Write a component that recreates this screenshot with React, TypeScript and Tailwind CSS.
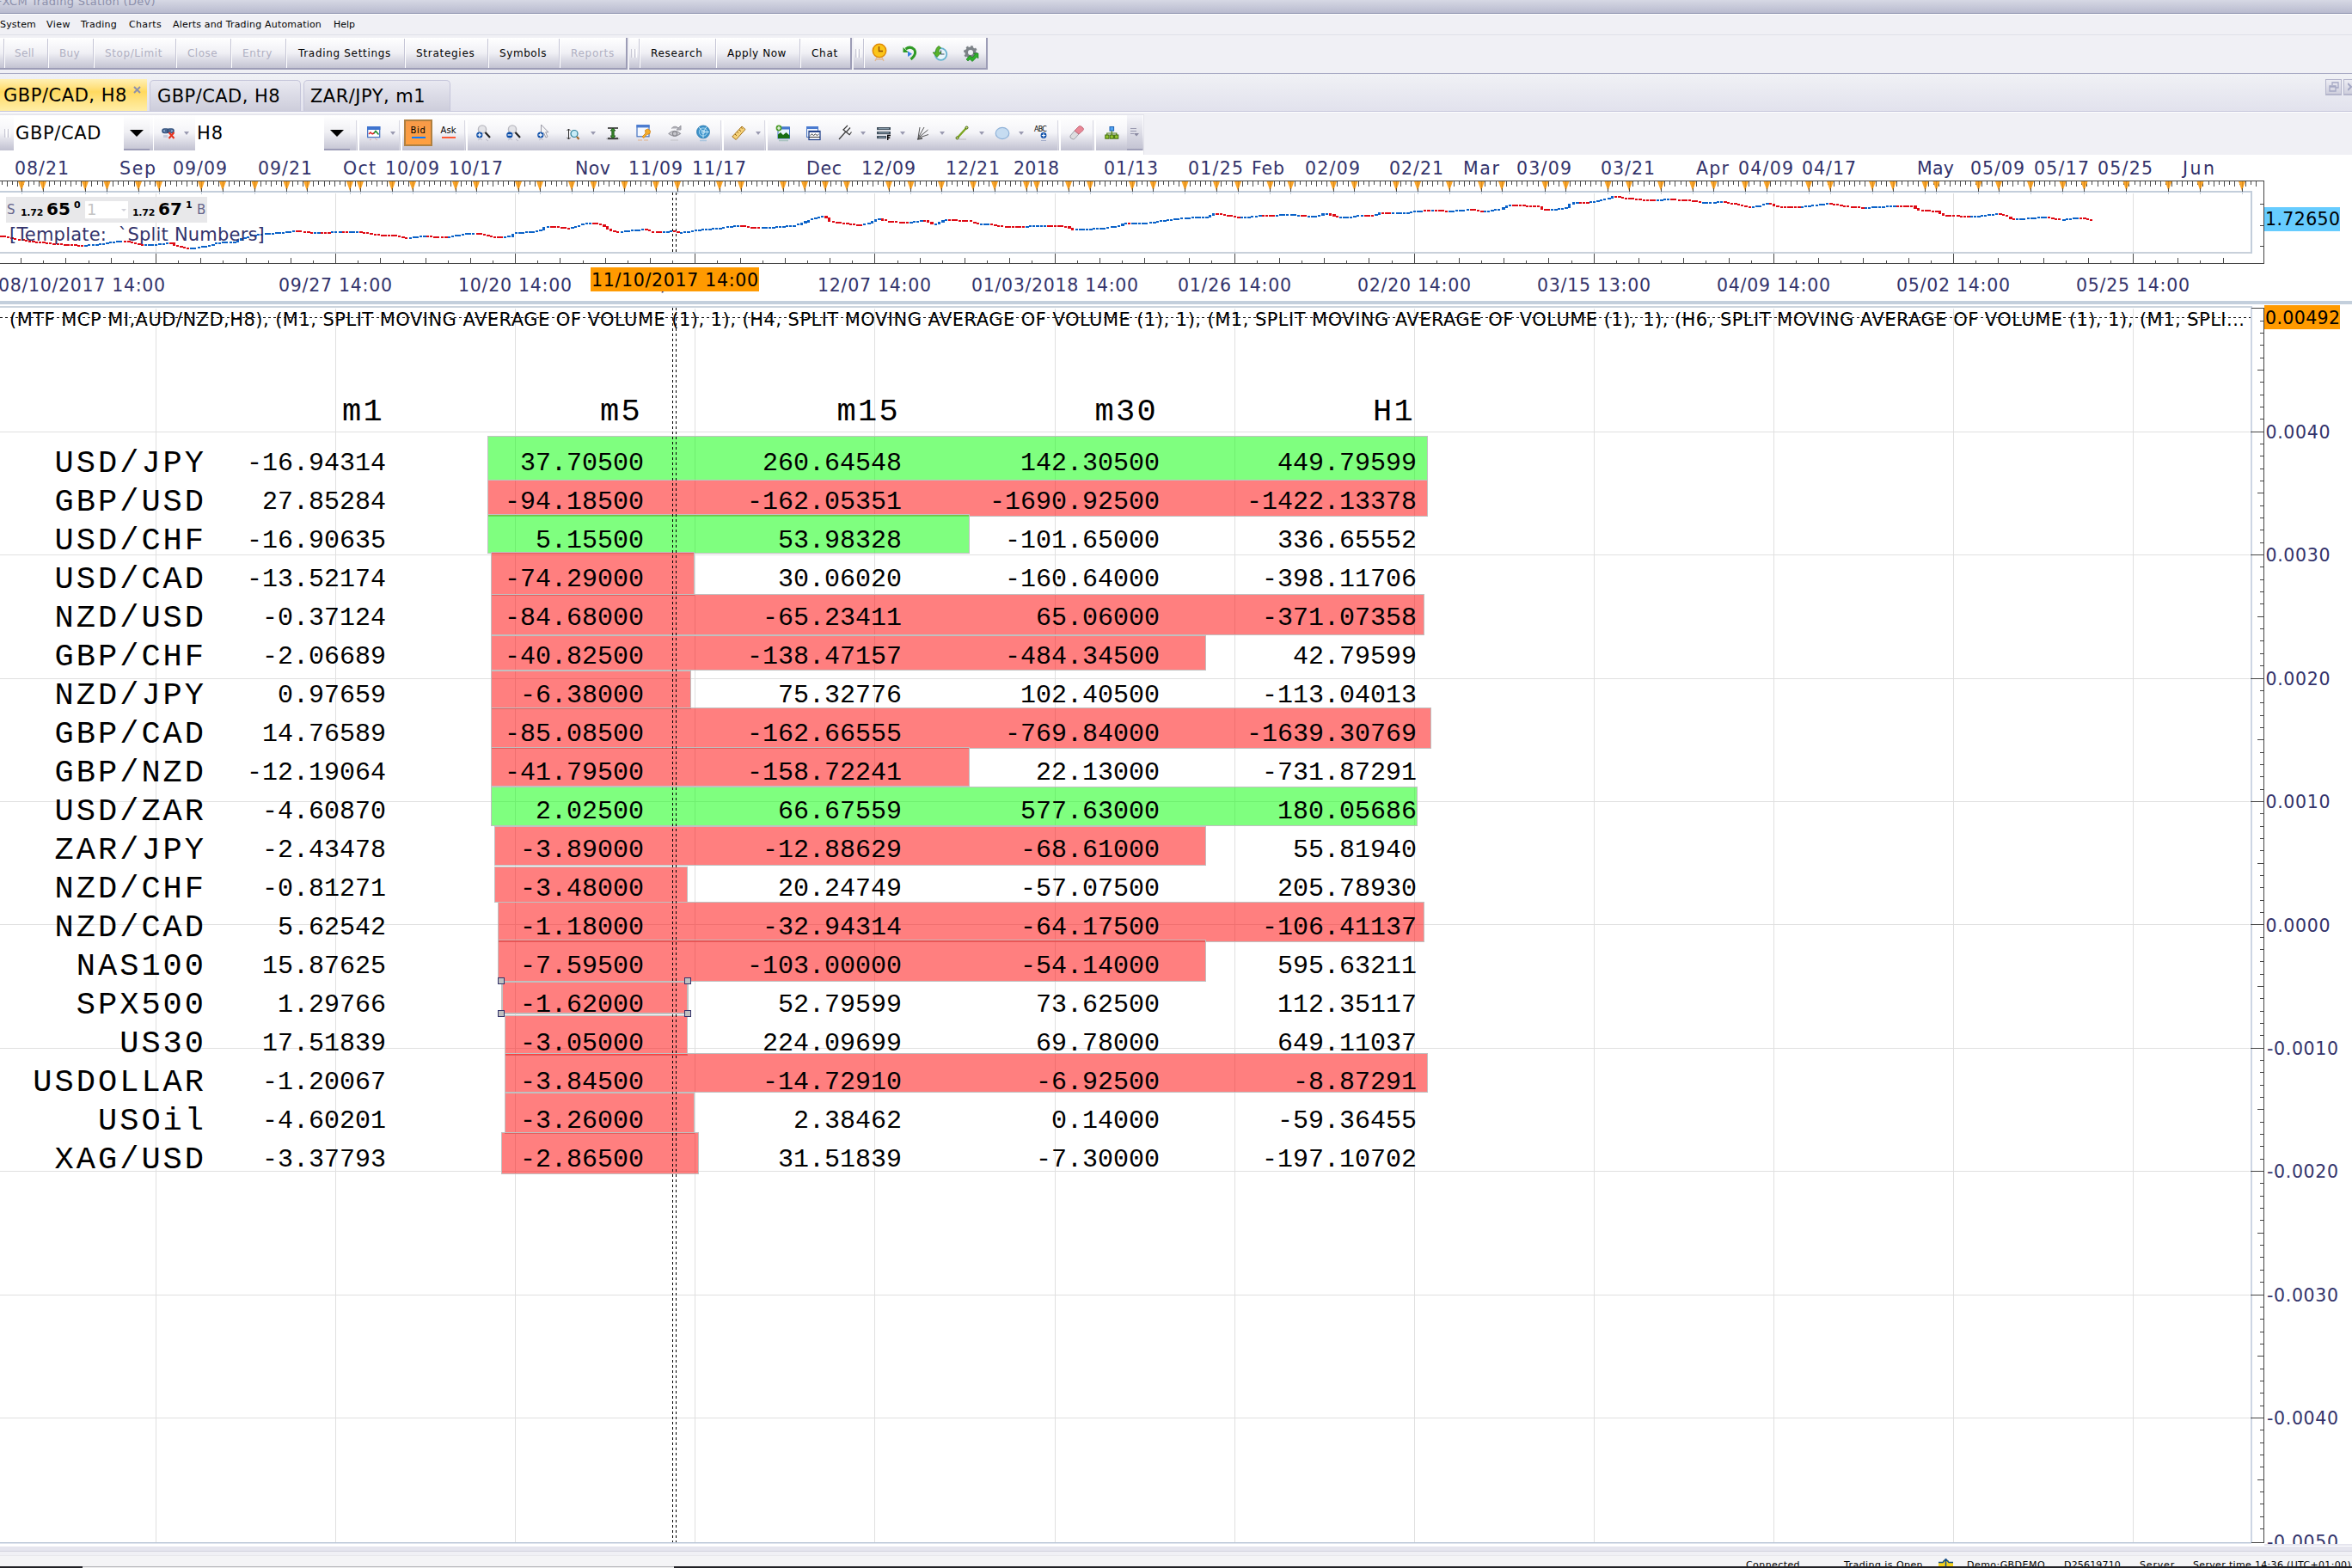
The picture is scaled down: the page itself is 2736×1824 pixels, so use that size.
import React, { useLayoutEffect, useRef, useState } from "react";

const NAVY = "#33336b";
const FONT = '"DejaVu Sans", Verdana, sans-serif';

/* Text whose tracking is adjusted so that it fills the given width. */
function Fit({ w, className = "", children }: { w: number; className?: string; children: string }) {
  const ref = useRef<HTMLSpanElement>(null);
  const [ls, setLs] = useState(0);
  useLayoutEffect(() => {
    const el = ref.current;
    if (el) setLs((w - el.getBoundingClientRect().width) / children.length);
  }, []);
  return (
    <span ref={ref} className={`inline-block whitespace-pre ${className}`} style={{ letterSpacing: ls }}>
      {children}
    </span>
  );
}

/* ---------- icons ---------- */
function Ico({ children, w = 18, h = 20 }: { children: React.ReactNode; w?: number; h?: number }) {
  return (
    <svg width={w} height={h} viewBox={`0 0 ${w} ${h}`} fill="none" className="block shrink-0">
      {children}
    </svg>
  );
}

const LinkIcon = () => (
  <Ico>
    <g stroke="#33507c" strokeWidth="1.6">
      <rect x="1" y="5" width="7" height="4.5" rx="2.2" fill="#7f9cc4" />
      <rect x="7" y="5" width="7" height="4.5" rx="2.2" fill="#7f9cc4" />
      <path d="M4 7.2H11" />
    </g>
    <path d="M8.5 9l6 7M14.5 9l-6 7" stroke="#e8311c" strokeWidth="2" />
    <path d="M2 12h5v3H2z" fill="#8a94b8" opacity=".35" />
  </Ico>
);
const TemplateIcon = () => (
  <Ico>
    <rect x=".7" y="2.7" width="14" height="12" fill="#fff" stroke="#3d6cc0" strokeWidth="1.2" />
    <rect x="0" y="2" width="15.4" height="4" fill="#3f74cf" />
    <path d="M2 11l2-2 2 2" stroke="#d22" strokeWidth="1.5" />
    <path d="M6 11l2.500-1.500" stroke="#d22" strokeWidth="1.500" />
    <path d="M8 10l2-2.500 3.500 4" stroke="#1a8a2a" strokeWidth="1.500" />
    <path d="M3 18l2-1M9 16l3 2" stroke="#c77" opacity=".5" />
  </Ico>
);
const Magnifier = ({ minus = false }: { minus?: boolean }) => (
  <Ico>
    <circle cx="7" cy="5.500" r="4.600" fill="#e4e4e8" stroke="#b9b9c0" strokeWidth="1.400" />
    <path d="M10.500 9l5.500 6" stroke="#222" strokeWidth="2.200" />
    <circle cx="3.800" cy="12" r="3.600" fill="#0b4da8" />
    <path d="M1.600 12h4.400" stroke="#fff" strokeWidth="1.300" />
    {!minus && <path d="M3.800 9.800v4.400" stroke="#fff" strokeWidth="1.300" />}
    <path d="M2 18l3-1.500 2 1.500M11 17l3 2" stroke="#99a" opacity=".5" />
  </Ico>
);
const CursorPlus = () => (
  <Ico>
    <path d="M4.500 0v12l3-2.500 2.500 5.500 2-1-2.300-5.200H13z" fill="#f4f4f6" stroke="#9a9aa6" />
    <circle cx="3.800" cy="12" r="3.600" fill="#0b4da8" />
    <path d="M1.600 12h4.400M3.800 9.800v4.400" stroke="#fff" strokeWidth="1.300" />
    <path d="M2 18l3-1.500 2 1.500" stroke="#99a" opacity=".5" />
  </Ico>
);
const AxisZoom = () => (
  <Ico>
    <path d="M2.500 5v12M.5 7l2-2 2 2M.5 15l2 2 2-2" stroke="#333" />
    <circle cx="9" cy="10.500" r="4" fill="#c9ecf7" stroke="#2b7f98" strokeWidth="1.200" />
    <path d="M12 14l2.500 3" stroke="#a0662a" strokeWidth="2" />
  </Ico>
);
const IBeam = () => (
  <Ico>
    <ellipse cx="8" cy="16.500" rx="8" ry="1.600" fill="#777" opacity=".4" />
    <path d="M2 4h12M2 16h12" stroke="#222" strokeWidth="1.300" />
    <path d="M8 4l3 3H9.200v6h1.800L8 16l-3-3h1.800V7H5z" fill="#3a8a2c" stroke="#164d12" strokeWidth=".8" />
  </Ico>
);
const NoteKey = () => (
  <Ico>
    <rect x="1" y=".8" width="14" height="13" fill="#f4f8ff" stroke="#4472c0" strokeWidth="1.200" />
    <rect x=".5" y=".2" width="15" height="3.200" fill="#4a7bd0" />
    <path d="M7 14l4-4-.5-3.500 3-1.500 3 2-.5 3.500-3.500 1-3.500 4z" fill="#f3ad2c" stroke="#d07d10" strokeWidth=".8" />
    <path d="M2 18h5M9 18h5" stroke="#e3ad80" opacity=".6" strokeWidth="1.500" />
  </Ico>
);
const EyeIcon = () => (
  <Ico>
    <path d="M1 10.500Q7.500 4 14.500 10.500 7.500 16 1 10.500z" fill="#d6d6da" stroke="#9a9aa2" strokeWidth="1.100" />
    <circle cx="8" cy="10.500" r="2.700" fill="#c5c5cb" stroke="#88888f" strokeWidth="1.300" />
    <path d="M4 4.500Q8 0 12.500 4.200M15 1v5h-5z" stroke="#9a9aa2" fill="#9a9aa2" strokeWidth="1" fillOpacity=".8" />
    <path d="M3 18h9" stroke="#aaa" opacity=".5" />
  </Ico>
);
const Radar = () => (
  <Ico>
    <circle cx="8" cy="8.500" r="7.400" fill="#3f94cb" stroke="#2c7cb2" />
    <circle cx="8" cy="8.500" r="4.600" stroke="#a9d8f2" />
    <circle cx="8" cy="8.500" r="2" stroke="#a9d8f2" />
    <path d="M8 8.500L12 2.500M8 8.500h7M8 8.500L3 3M8 8.500v7" stroke="#d5eefa" strokeWidth=".9" />
    <path d="M4 18.500h8" stroke="#8bb8da" opacity=".6" strokeWidth="1.500" />
  </Ico>
);
const RulerIcon = () => (
  <Ico>
    <path d="M.8 14L12 2l4 3.500L5.200 17.500z" fill="#f6d27a" stroke="#a5731a" />
    <path d="M4 11l2 1.800M6.500 8.500l1.400 1.200M9 6l2 1.800M11.200 3.500l1.400 1.200" stroke="#8d5e10" />
  </Ico>
);
const PictureIcon = () => (
  <Ico>
    <rect x="3" y="3" width="13.500" height="13" fill="#e9f3fd" stroke="#3c6ec4" />
    <rect x="3" y="2.500" width="13.500" height="3" fill="#4579cf" />
    <path d="M3 16V11.500l3-2.500 3 3 3.500-3 4 3.500V16z" fill="#176d12" />
    <circle cx="4" cy="4" r="3.400" fill="#4d9c2a" />
    <path d="M2 4h4M4 2v4" stroke="#fff" strokeWidth="1.200" />
    <path d="M4 18.500h11" stroke="#7a9" opacity=".5" strokeWidth="1.600" />
  </Ico>
);
const WindowsIcon = () => (
  <Ico>
    <rect x="1.500" y="2.500" width="13" height="12" fill="#f4f8ff" stroke="#4472c0" />
    <rect x="1" y="2" width="14" height="3" fill="#4a7bd0" />
    <rect x="4" y="7.500" width="13" height="10" fill="#fff" stroke="#27468c" strokeWidth="1.300" />
    <path d="M4 8h13" stroke="#27468c" strokeWidth="2" />
    <path d="M5.500 12.500l2-1.500 2 1.500 2-1.500 2 1.500 2-1.500M4 14.500h13" stroke="#222" strokeWidth=".9" />
  </Ico>
);
const Pitchfork = () => (
  <Ico>
    <path d="M1 17L9 8M5.500 5.500l8 6.500M6 6l5-5M9.500 8.500l4.500-5M13 12l2.500-3.500" stroke="#3b3b3b" strokeWidth="1.200" />
  </Ico>
);
const LinesF = () => (
  <Ico>
    {[3, 8, 13].map((y) => (
      <g key={y}>
        <rect x="1" y={y} width={y === 13 ? 11 : 16} height="3.200" fill="#43525f" />
        <path d={`M3 ${y + 1.6}h${y === 13 ? 8 : 12}`} stroke="#93a7b5" strokeWidth=".9" />
      </g>
    ))}
    <path d="M13.700 18V12.500H17M13.700 15.200h2.600" stroke="#000" strokeWidth="1.400" />
  </Ico>
);
const FanIcon = () => (
  <Ico>
    <path d="M2 15.500L4 3M2 15.500L9 3M2 15.500L13.500 6M2 15.500L14 11.500" stroke="#555" />
    <path d="M1 17l6-1" stroke="#444" strokeWidth="1.500" />
  </Ico>
);
const TrendLine = () => (
  <Ico>
    <path d="M3 15L13 4" stroke="#7ba51f" strokeWidth="2.400" />
    <circle cx="2.500" cy="15.500" r="1.500" fill="#cde27a" stroke="#3f5f0c" />
    <circle cx="13.500" cy="3.500" r="1.500" fill="#cde27a" stroke="#3f5f0c" />
    <path d="M4 17h9" stroke="#888" opacity=".4" />
  </Ico>
);
const EllipseIcon = () => (
  <Ico>
    <ellipse cx="9" cy="10" rx="7.800" ry="6.600" fill="#c6dcf1" stroke="#8fb2d8" strokeWidth="1.200" />
  </Ico>
);
const AbcIcon = () => (
  <div className="relative h-[20px] w-[18px]">
    <span className="absolute left-0 top-[1px] text-[8px] leading-[9px] tracking-[-0.800px] text-black">ABC</span>
    <div className="absolute left-[7px] top-[9px]">
      <Ico w={8} h={12}>
        <circle cx="4" cy="3.500" r="3.400" fill="#0b4da8" />
        <path d="M1.800 3.500h4.400M4 1.300v4.400" stroke="#fff" strokeWidth="1.200" />
        <path d="M1 9.500h6" stroke="#6b7fae" opacity=".5" />
      </Ico>
    </div>
  </div>
);
const Eraser = () => (
  <Ico>
    <path d="M1 13L6 7l5 4-5 5.500q-1.500 1-3 0L1 15z" fill="#dcdcdf" stroke="#a0a0a9" />
    <path d="M6 7l5-5q1.500-1 3 .3L16 4q1 1.500 0 2.500L11 11z" fill="#e98796" stroke="#c36a7a" />
  </Ico>
);
const TreeIcon = () => (
  <Ico>
    <rect x="6" y="2.500" width="4.600" height="4.600" fill="#52a3f0" stroke="#1c62b4" />
    <path d="M8.300 7.200v3M2.800 12V10h11v2M8.300 10v2" stroke="#4d7e11" strokeWidth="1.200" />
    {[0.8, 6.2, 11.6].map((x) => (
      <rect key={x} x={x} y="12" width="4.200" height="4.200" fill="#93c430" stroke="#3f6b0a" />
    ))}
  </Ico>
);
const ClockGold = () => (
  <Ico w={18} h={24}>
    <circle cx="9" cy="9" r="7.700" fill="#fbc51a" stroke="#e08a07" strokeWidth="1.500" />
    <path d="M8.500 4v5.500H13" stroke="#8d4a05" strokeWidth="1.400" />
    <path d="M6 17l-2 4M12 17l2 4M5 19h8" stroke="#e1a870" opacity=".7" strokeWidth="1.500" />
  </Ico>
);
const ReplayIcon = () => (
  <Ico>
    <path d="M3.500 5Q9 1 13.500 5.500 17 11 9.500 17" stroke="#2f9a25" strokeWidth="3" />
    <path d="M.5 3v6h6.500z" fill="#2f9a25" />
    <path d="M6 7.500l5 3.200-5 3.300z" fill="#3a7fe0" />
  </Ico>
);
const HistoryIcon = () => (
  <Ico>
    <circle cx="9.500" cy="11" r="6.800" fill="#e8f5fb" stroke="#67b3cf" strokeWidth="1.800" />
    <path d="M9.500 6.500V11h4" stroke="#456" strokeWidth="1.200" />
    <path d="M7 1.500Q3 4 3.500 9H0l5 5.500L10 9H7Q6.500 5.500 9.500 3.500z" fill="#58b22a" stroke="#2d7d12" strokeWidth=".7" />
  </Ico>
);
const GearUp = () => (
  <Ico>
    <circle cx="8" cy="9" r="4.800" stroke="#7c8287" strokeWidth="3.600" />
    <circle cx="8" cy="9" r="7" stroke="#7c8287" strokeWidth="2" strokeDasharray="2.750 2.750" />
    <path d="M3 17l4-4.500 3 2.500 3-3.500-1.500-1.500H17v6l-1.800-1.500-5 5-3-2.500L5 19z" fill="#2faf2b" stroke="#137318" strokeWidth=".6" />
  </Ico>
);

const Arr = () => <div className="h-0 w-0 border-x-[3.500px] border-t-[4px] border-x-transparent border-t-[#9a9ab0]" />;
const Sep = () => (
  <div className="flex h-[35px] w-[4px] shrink-0 gap-[1px] self-end">
    <div className="w-px bg-[#d8d8e2]" />
    <div className="w-[2px] bg-white" />
  </div>
);

/* ---------- main action toolbar ---------- */
const GROUP = "flex h-[37px] shrink-0 items-center border-b-2 border-r-2 border-[#9c9cb6] bg-linear-to-b from-white via-[#f0f0f5] to-[#c3c3d2]";
const GroupSep = () => <div className="h-[34px] w-[2px] shrink-0 border-l border-[#c5c5d5] bg-white" />;
const Grip = () => (
  <div className="flex w-[11px] shrink-0 justify-center gap-[1px]">
    <div className="h-[10px] w-px bg-[#c8c8d4]" />
    <div className="h-[10px] w-px bg-white" />
    <div className="h-[10px] w-px bg-[#c8c8d4]" />
    <div className="h-[10px] w-px bg-white" />
  </div>
);
const actions: [string, string, string, number, boolean][] = [
  ["Sell", "w-[51px]", "pl-[11px]", 23, false],
  ["Buy", "w-[53px]", "pl-[12px]", 24, false],
  ["Stop/Limit", "w-[96px]", "pl-[12px]", 67, false],
  ["Close", "w-[64px]", "pl-[12px]", 35, false],
  ["Entry", "w-[64px]", "pl-[12px]", 35, false],
  ["Trading Settings", "w-[138px]", "pl-[13px]", 108, true],
  ["Strategies", "w-[97px]", "pl-[12px]", 68.5, true],
  ["Symbols", "w-[83px]", "pl-[12px]", 55, true],
  ["Reports", "w-[78px]", "pl-[12px]", 51, false],
];
const actions2: [string, string, string, number][] = [
  ["Research", "w-[89px]", "pl-[12px]", 60.5],
  ["Apply Now", "w-[98px]", "pl-[12px]", 69],
  ["Chat", "w-[59px]", "pl-[12px]", 31],
];

/* ---------- chart toolbar ---------- */
const tools: [string, React.ReactNode][] = [
  ["w-[35px]", <Magnifier />],
  ["w-[36px]", <Magnifier minus />],
  ["w-[34px]", <CursorPlus />],
  ["w-[28px]", <AxisZoom />],
  ["w-[18px]", <Arr />],
  ["w-[35px]", <IBeam />],
  ["w-[37px]", <NoteKey />],
  ["w-[33px]", <EyeIcon />],
  ["w-[28px]", <Radar />],
  ["w-[13px]", <Sep />],
  ["w-[28px]", <RulerIcon />],
  ["w-[10px]", <Arr />],
  ["w-[13px]", <Sep />],
  ["w-[35px]", <PictureIcon />],
  ["w-[38px]", <WindowsIcon />],
  ["w-[26px]", <Pitchfork />],
  ["w-[18px]", <Arr />],
  ["w-[28px]", <LinesF />],
  ["w-[19px]", <Arr />],
  ["w-[27px]", <FanIcon />],
  ["w-[18px]", <Arr />],
  ["w-[28px]", <TrendLine />],
  ["w-[18px]", <Arr />],
  ["w-[28px]", <EllipseIcon />],
  ["w-[18px]", <Arr />],
  ["w-[27px]", <AbcIcon />],
  ["w-[14px]", <Sep />],
  ["w-[27px]", <Eraser />],
  ["w-[14px]", <Sep />],
  ["w-[26px]", <TreeIcon />],
];

const ComboArrow = () => (
  <div className="flex h-full w-[30px] shrink-0 items-center justify-center border-b-2 border-[#9c9cb6] bg-linear-to-b from-white via-[#f0f0f4] to-[#c8c8d6]">
    <div className="mt-[2px] h-0 w-0 border-x-[8px] border-t-[8px] border-x-transparent border-t-black" />
  </div>
);

/* ---------- chart data ---------- */
const gridX = Array.from({ length: 12 }, (_, i) => Math.floor(181.5 + i * 209.1) + 0.5);

const topDates: [string, number, number][] = [
  ["08/21", 18, 61], ["Sep", 140, 40], ["09/09", 202, 61], ["09/21", 301, 61], ["Oct", 400, 36], ["10/09", 449, 61],
  ["10/17", 523, 61], ["Nov", 670, 39], ["11/09", 732, 61], ["11/17", 806, 61], ["Dec", 939, 39], ["12/09", 1003, 61],
  ["12/21", 1101, 61], ["2018", 1180, 51], ["01/13", 1285, 61], ["01/25", 1383, 62], ["Feb", 1457, 36], ["02/09", 1519, 62],
  ["02/21", 1617, 61], ["Mar", 1703, 40], ["03/09", 1765, 62], ["03/21", 1863, 61], ["Apr", 1974, 36], ["04/09", 2023, 62],
  ["04/17", 2097, 61], ["May", 2231, 41], ["05/09", 2293, 61], ["05/17", 2367, 62], ["05/25", 2441, 62], ["Jun", 2540, 35],
];
const bottomDates = ["09/27 14:00", "10/20 14:00", "11/14 14:00", "12/07 14:00", "01/03/2018 14:00", "01/26 14:00", "02/20 14:00", "03/15 13:00", "04/09 14:00", "05/02 14:00", "05/25 14:00"];

const markers = [
  25, 50, 99, 124.5, 161, 185, 234, 259, 296.5, 333.5, 357, 407, 419, 456, 480, 530, 554, 603, 628, 665, 690.5, 726.5, 763, 788, 837, 862,
  911, 936, 960, 985, 1034, 1059.5, 1095, 1132, 1157, 1194, 1206, 1243, 1268, 1317, 1341.5, 1378.5, 1415, 1440, 1477.5, 1501.5, 1551,
  1575.5, 1624, 1649, 1686, 1723, 1747, 1797.5, 1821.5, 1870.5, 1895, 1932, 1969, 1993.5, 2030, 2055.5, 2104, 2129, 2178, 2202, 2239.5,
  2252.5, 2301.5, 2325, 2362, 2399.5, 2424.5, 2473.5, 2522.5, 2559.5, 2608,
];

const price = [
  0, 274, 15, 277, 30, 280, 50, 282, 70, 284, 100, 285.5, 120, 283.5, 145, 280, 165, 284.5, 180, 285, 200, 282, 206, 286, 222, 289, 245, 286,
  255, 282.5, 275, 281, 285, 277, 295, 274, 310, 272, 330, 270.5, 345, 268.5, 365, 271, 385, 270.5, 395, 269, 420, 270, 440, 273, 460, 274,
  475, 277, 495, 274.5, 520, 276, 540, 272.5, 555, 271, 570, 275, 593, 276, 600, 271, 630, 268.5, 637, 263, 665, 265.5, 680, 261, 689, 259,
  702, 261.7, 711, 268, 720, 270, 751, 266.5, 758, 269, 774, 270, 785, 268.5, 792, 270.5, 807, 269, 818, 266.7, 836, 265.7, 863, 262, 872, 264,
  903, 264, 928, 262, 943, 256, 961, 251, 968, 258, 988, 260, 1004, 262, 1013, 259, 1024, 253.7, 1033, 257, 1055, 259, 1077, 256.3, 1088, 261,
  1102, 255.7, 1126, 256.3, 1140, 261, 1151, 259.7, 1160, 262.7, 1196, 264.3, 1202, 262.3, 1227, 262.3, 1245, 264, 1248, 267, 1283, 265.7,
  1305, 262.3, 1310, 259, 1336, 259.7, 1359, 255.7, 1387, 253, 1407, 252, 1416, 247.7, 1427, 250.3, 1445, 253.3, 1467, 251, 1498, 249.7,
  1516, 250.3, 1521, 252, 1539, 250.7, 1544, 247.3, 1556, 252.3, 1572, 252.7, 1583, 250.7, 1601, 250.7, 1606, 247.3, 1639, 248, 1646, 245.7,
  1672, 244.3, 1684, 245.7, 1713, 243.7, 1724, 246.3, 1748, 243.3, 1757, 238.3, 1791, 239.7, 1795, 243, 1806, 244, 1826, 241.3, 1830, 236,
  1853, 235, 1873, 231.3, 1878, 228.3, 1891, 230.3, 1909, 232, 1929, 233.3, 1940, 231.3, 1972, 233.3, 1980, 235.7, 2007, 234.7, 2021, 237.7,
  2038, 241, 2049, 239.3, 2060, 236, 2065, 239.3, 2078, 241, 2103, 240, 2130, 236.7, 2145, 239.3, 2170, 241.7, 2208, 239.3, 2228, 240,
  2232, 244.3, 2255, 245.7, 2261, 250.3, 2297, 252, 2326, 248.7, 2335, 251.7, 2344, 255.3, 2382, 252.3, 2398, 255.7, 2418, 253.3, 2433, 255.3,
];
function priceAt(x: number) {
  for (let i = 0; i + 3 < price.length; i += 2) {
    if (x <= price[i + 2]) {
      const t = (x - price[i]) / (price[i + 2] - price[i]);
      return price[i + 1] + t * (price[i + 3] - price[i + 1]);
    }
  }
  return price[price.length - 1];
}
const candles = Array.from({ length: 594 }, (_, i) => {
  const x = i * 4.1;
  const a = priceAt(x);
  const b = priceAt(x + 4.1);
  const noise = Math.sin(i * 12.9898) * 0.25;
  return { x: Math.round(x), y: Math.round(Math.min(a, b) - 0.5), h: Math.max(2, Math.round(Math.abs(b - a) + 1)), up: b - a + noise < 0 };
});

const T = ({ x, y, w, children, fill = NAVY, size = 20.5, anchor = "start" }: { x: number; y: number; w?: number; children: string; fill?: string; size?: number; anchor?: "start" | "middle" }) => (
  <text x={x} y={y} textLength={w} fontSize={size} fill={fill} textAnchor={anchor} fontFamily={FONT}>
    {children}
  </text>
);

/* Overview strip: spans page rows 180 to 355. */
function Overview() {
  return (
    <svg width="2736" height="175" viewBox="0 180 2736 175" className="block" shapeRendering="crispEdges">
      <rect x="0" y="180" width="2736" height="175" fill="#fff" />
      {topDates.map(([s, x, w], i) => (
        <T key={i} x={x - 1} y={202.5} w={w + 2}>{s}</T>
      ))}
      {Array.from({ length: 428 }, (_, i) => (
        <rect key={i} x={Math.round(2 + i * 6.14)} y="211" width="1" height={i % 2 ? 6 : 4} fill="#4a4a4a" />
      ))}
      {gridX.map((x) => (
        <g key={x}>
          <rect x={x - 0.5} y="225" width="1" height="68" fill="#dedede" />
          <rect x={x - 0.5} y="294" width="1" height="12" fill="#4a4a4a" />
        </g>
      ))}
      <rect x="0" y="222" width="2619" height="2" fill="#c3cedb" />
      <rect x="0" y="293" width="2619" height="2" fill="#c8d0da" />
      <rect x="2618" y="222" width="2" height="73" fill="#c3cedb" />
      {markers.map((m) => (
        <g key={m}>
          <path d={`M${m - 4} 211H${m + 4}L${m} 222z`} fill="#fba62b" shapeRendering="auto" />
          <rect x={Math.floor(m)} y="211" width="1" height="9" fill="#d98a1a" />
          <rect x={Math.floor(m)} y="219" width="1" height="4" fill="#4a4a4a" />
          <rect x={Math.floor(m)} y="223" width="1" height="3" fill="#c3cedb" />
        </g>
      ))}
      <rect x="0" y="210" width="2634" height="1" fill="#444" />
      <rect x="2633" y="210" width="1" height="97" fill="#444" />
      <rect x="0" y="306" width="2634" height="1" fill="#444" />
      {Array.from({ length: 99 }, (_, i) => {
        const k = i - 6;
        const h = k % 2 === 0 ? 6 : 3;
        return k % 8 === 0 ? null : <rect key={i} x={Math.floor(181.5 + k * 26.137)} y={306 - h} width="1" height={h} fill="#4a4a4a" />;
      })}
      {[237, 262, 286].map((y) => (
        <rect key={y} x="2629" y={y} width="5" height="1" fill="#444" />
      ))}
      {candles.map((c, i) => (
        <rect key={i} x={c.x} y={c.y} width={3 + (i % 3 ? 0 : 1)} height={c.h} fill={c.up ? "#0a62c8" : "#de0a14"} />
      ))}
      <path d="M782.500 224V293M786.500 224V293" stroke="#000" strokeDasharray="3 3" />
      <T x={-2} y={339} w={194}>08/10/2017 14:00</T>
      {bottomDates.map((s, i) => (
        <T key={i} x={gridX[i + 1] - 0.5} y={339} w={s.length > 12 ? 194 : 132} anchor="middle">{s}</T>
      ))}
      <rect x="687" y="311" width="196" height="28" fill="#ff9a00" />
      <T x={688} y={332.5} w={194} fill="#000">11/10/2017 14:00</T>
      <rect x="2634" y="241" width="88" height="28" fill="#66ccff" />
      <T x={2635} y={262} w={87} fill="#000">1.72650</T>
      <rect x="0" y="350" width="2736" height="4" fill="#c3cfdc" />
    </svg>
  );
}

const G = "rgba(0,255,0,.5)";
const R = "rgba(255,0,0,.5)";
/* left, top, right, bottom, fill */
const boxes: [number, number, number, number, string][] = [
  [567, 507, 1660, 558, G], [567, 558, 1660, 600, R], [567, 598, 1127, 643, G], [571, 642, 807, 692, R], [571, 691, 1656, 738, R],
  [571, 739, 1402, 779, R], [571, 780, 803, 824, R], [571, 823, 1664, 870, R], [571, 869, 1127, 914, R], [571, 915, 1648, 960, G],
  [575, 961, 1402, 1006, R], [575, 1008, 799, 1049, R], [579, 1049, 1656, 1095, R], [579, 1093, 1402, 1141, R], [583, 1141, 799, 1178, R],
  [587, 1181, 799, 1227, R], [587, 1225, 1660, 1270, R], [587, 1271, 807, 1318, R], [583, 1317, 812, 1365, R],
];

/* Indicator pane: spans page rows 355 to 1798. */
function Pane() {
  return (
    <svg width="2736" height="1443" viewBox="0 355 2736 1443" className="block" shapeRendering="crispEdges">
      <rect x="0" y="355" width="2736" height="1443" fill="#fff" />
      {gridX.map((x) => (
        <rect key={x} x={x - 0.5} y="359" width="1" height="1435" fill="#e0e0e0" />
      ))}
      {Array.from({ length: 9 }, (_, i) => (
        <rect key={i} x="0" y={Math.floor(502.2 + i * 143.4)} width="2617" height="1" fill="#e0e0e0" />
      ))}
      <rect x="0" y="356" width="2619" height="2" fill="#ccd4dd" />
      <rect x="0" y="1794" width="2619" height="1" fill="#b9c6d6" />
      <rect x="0" y="1795" width="2619" height="1" fill="#dfe4ee" />
      <rect x="2618" y="356" width="2" height="1438" fill="#cdd6e4" />
      <rect x="2633" y="358" width="1" height="1436" fill="#444" />
      <rect x="2619" y="358" width="15" height="1" fill="#444" />
      <rect x="2619" y="1794" width="15" height="1" fill="#444" />
      {Array.from({ length: 99 }, (_, i) => {
        const k = i - 9;
        const len = k % 10 === 0 ? 15 : k % 5 === 0 ? 7 : 4;
        return <rect key={i} x={2633 - len} y={Math.floor(502.2 + k * 14.34)} width={len} height="1" fill="#444" />;
      })}
      {boxes.map(([l, t, r, b, f], i) => (
        <rect key={i} x={l + 0.5} y={t + 0.5} width={r - l} height={b - t} fill={f} stroke="#c0c0c0" strokeWidth={i === 14 ? 2 : 1} />
      ))}
      <path d="M782.500 358V1794M786.500 358V1794" stroke="#000" strokeDasharray="3 3" />
      <path d="M0 369.500H2618" stroke="#000" strokeDasharray="3 3" />
      {[[583, 1141], [800, 1141], [583, 1179], [800, 1179]].map(([x, y]) => (
        <rect key={`${x}-${y}`} x={x - 3.5} y={y - 3.5} width="7" height="7" fill="#c0c0c0" stroke={NAVY} />
      ))}
      <T x={11} y={378.5} w={2600} fill="#000" size={21}>
        (MTF MCP MI,AUD/NZD,H8), (M1, SPLIT MOVING AVERAGE OF VOLUME (1), 1), (H4, SPLIT MOVING AVERAGE OF VOLUME (1), 1), (M1, SPLIT MOVING AVERAGE OF VOLUME (1), 1), (H6, SPLIT MOVING AVERAGE OF VOLUME (1), 1), (M1, SPLI...
      </T>
      {["0.0040", "0.0030", "0.0020", "0.0010", "0.0000"].map((s, i) => (
        <T key={s} x={2635.5} y={510 + i * 143.4} w={75}>{s}</T>
      ))}
      {["-0.0010", "-0.0020", "-0.0030", "-0.0040", "-0.0050"].map((s, i) => (
        <T key={s} x={2637} y={510 + (i + 5) * 143.4} w={83}>{s}</T>
      ))}
      <rect x="2634" y="1796" width="102" height="2" fill="#e5e5ee" />
      <rect x="2634" y="355" width="88" height="28" fill="#ff9a00" />
      <T x={2635} y={376.5} w={87} fill="#000">0.00492</T>
    </svg>
  );
}

const rows = [
  "USD/JPY -16.94314 37.70500 260.64548 142.30500 449.79599",
  "GBP/USD 27.85284 -94.18500 -162.05351 -1690.92500 -1422.13378",
  "USD/CHF -16.90635 5.15500 53.98328 -101.65000 336.65552",
  "USD/CAD -13.52174 -74.29000 30.06020 -160.64000 -398.11706",
  "NZD/USD -0.37124 -84.68000 -65.23411 65.06000 -371.07358",
  "GBP/CHF -2.06689 -40.82500 -138.47157 -484.34500 42.79599",
  "NZD/JPY 0.97659 -6.38000 75.32776 102.40500 -113.04013",
  "GBP/CAD 14.76589 -85.08500 -162.66555 -769.84000 -1639.30769",
  "GBP/NZD -12.19064 -41.79500 -158.72241 22.13000 -731.87291",
  "USD/ZAR -4.60870 2.02500 66.67559 577.63000 180.05686",
  "ZAR/JPY -2.43478 -3.89000 -12.88629 -68.61000 55.81940",
  "NZD/CHF -0.81271 -3.48000 20.24749 -57.07500 205.78930",
  "NZD/CAD 5.62542 -1.18000 -32.94314 -64.17500 -106.41137",
  "NAS100 15.87625 -7.59500 -103.00000 -54.14000 595.63211",
  "SPX500 1.29766 -1.62000 52.79599 73.62500 112.35117",
  "US30 17.51839 -3.05000 224.09699 69.78000 649.11037",
  "USDOLLAR -1.20067 -3.84500 -14.72910 -6.92500 -8.87291",
  "USOil -4.60201 -3.26000 2.38462 0.14000 -59.36455",
  "XAG/USD -3.37793 -2.86500 31.51839 -7.30000 -197.10702",
].map((r) => r.split(" "));

const TAB = "flex h-[36px] shrink-0 items-center border border-b-0 border-[#c5c5da] rounded-t-[5px] text-[21px] leading-[36px] text-black";
const menu: [string, string, number][] = [
  ["System", "w-[54px]", 42], ["View", "w-[40px]", 28], ["Trading", "w-[56px]", 42], ["Charts", "w-[51px]", 38],
  ["Alerts and Trading Automation", "w-[187px]", 173], ["Help", "w-[40px]", 25],
];

export default function App() {
  return (
    <div className="flex h-[1824px] w-[2736px] flex-col overflow-hidden bg-[#f0f0f5] font-['DejaVu_Sans',Verdana,sans-serif]">
      {/* title bar */}
      <div className="h-[16px] shrink-0 overflow-hidden border-b border-[#8a8fac] bg-linear-to-b from-[#d6d8e4] to-[#b9bbcf]">
        <div className="mt-[-7px] ml-[-5px] h-[16px] leading-[16px]">
          <Fit w={186} className="text-[13px] text-[#8c8fab]">FXCM Trading Station (Dev)</Fit>
        </div>
      </div>

      {/* menu */}
      <div className="flex h-[25px] shrink-0 items-center border-b border-t border-b-[#dfe0e8] border-t-white pl-[-1px] text-[11px] leading-[24px] text-black">
        {menu.map(([s, c, w]) => (
          <div key={s} className={c + " shrink-0"}>
            <Fit w={w}>{s}</Fit>
          </div>
        ))}
      </div>

      {/* actions */}
      <div className="flex h-[45px] shrink-0 gap-[2px] border-b border-[#a9abc5] pt-[3px] text-[12px] leading-[36px]">
        <div className={GROUP}>
          <div className="w-[4px]" />
          {actions.map(([s, cw, cp, w, on]) => (
            <div key={s} className={`flex shrink-0 items-center ${cw}`}>
              <GroupSep />
              <div className={`${cp} pt-[1px] ${on ? "text-black" : "text-[#b0b0c2]"}`}>
                <Fit w={w}>{s}</Fit>
              </div>
            </div>
          ))}
        </div>
        <div className={GROUP}>
          <Grip />
          {actions2.map(([s, cw, cp, w]) => (
            <div key={s} className={`flex shrink-0 items-center ${cw}`}>
              <GroupSep />
              <div className={`${cp} pt-[1px] text-black`}>
                <Fit w={w}>{s}</Fit>
              </div>
            </div>
          ))}
        </div>
        <div className={GROUP}>
          <Grip />
          <GroupSep />
          <div className="flex w-[141px] items-center gap-[17.500px] pl-[8px]">
            <ClockGold />
            <ReplayIcon />
            <HistoryIcon />
            <GearUp />
          </div>
        </div>
      </div>

      {/* tabs */}
      <div className="flex h-[44px] shrink-0 items-end justify-between border-b border-b-[#c5c5da] bg-linear-to-b from-[#f0f1f5] to-[#e2e2ed]">
        <div className="flex items-end gap-[3px]">
          <div className="flex h-[37px] w-[171px] items-center bg-linear-to-b from-[#fff0b4] via-[#ffd95e] via-40% to-[#ffeea6] pl-[4px] text-[21px] leading-[36px] text-black">
            <Fit w={144}>GBP/CAD, H8</Fit>
            <svg width="9" height="9" viewBox="0 0 9 9" className="mb-[12px] ml-[7px]">
              <path d="M1 1l7 7M8 1L1 8" stroke="#8d90ac" strokeWidth="2" />
            </svg>
          </div>
          <div className={TAB + " w-[176px] bg-linear-to-b from-[#e9e9f1] to-[#cdcddb] pl-[8px]"}>
            <Fit w={143}>GBP/CAD, H8</Fit>
          </div>
          <div className={TAB + " w-[171px] bg-linear-to-b from-[#e9e9f1] to-[#cdcddb] pl-[7px]"}>
            <Fit w={134}>ZAR/JPY, m1</Fit>
          </div>
        </div>
        <div className="flex gap-[2px] self-start pt-[6px]">
          <div className="flex h-[19px] w-[19px] items-center justify-center border border-b-2 border-[#b5b6cc] bg-linear-to-b from-[#ededf4] to-[#cfcfdd]">
            <svg width="12" height="12" viewBox="0 0 12 12" fill="none" stroke="#a5a8c4" strokeWidth="1.300">
              <path d="M4 4V1h7v6H8M1 5h7v6H1zM1 6h7" />
            </svg>
          </div>
          <div className="flex h-[19px] w-[10px] items-center justify-end overflow-hidden border border-b-2 border-r-0 border-[#b5b6cc] bg-linear-to-b from-[#ededf4] to-[#cfcfdd]">
            <svg width="5" height="10" viewBox="0 0 5 10" fill="none" stroke="#a5a8c4" strokeWidth="2">
              <path d="M0 1l4 4-4 4" />
            </svg>
          </div>
        </div>
      </div>

      {/* chart toolbar */}
      <div className="h-[50px] shrink-0 border-t border-white pt-[2px]">
        <div className="flex h-[47px] w-[1331px] flex-col border-r border-t border-[#e2e2ea] bg-white">
          <div className="flex h-[41px] items-center bg-linear-to-b from-white via-[#f4f4f8] via-50% to-[#c0c0d0] text-[21px] leading-[43px] text-black">
            <div className="flex w-[16px] shrink-0 items-center pl-[3px]">
              <Grip />
            </div>
            <div className="h-full w-[128px] shrink-0 bg-white pl-[2px]">
              <Fit w={100}>GBP/CAD</Fit>
            </div>
            <ComboArrow />
            <div className="ml-[4px] flex h-full w-[49px] shrink-0 items-center border-l border-white pl-[9px]">
              <LinkIcon />
              <div className="ml-[8px]">
                <Arr />
              </div>
            </div>
            <div className="h-full w-[150px] shrink-0 bg-white pl-[2px]">
              <Fit w={31}>H8</Fit>
            </div>
            <ComboArrow />
            <div className="flex h-full w-[20px] shrink-0 pl-[7px]">
              <Sep />
            </div>
            <div className="w-[27px] shrink-0">
              <TemplateIcon />
            </div>
            <div className="w-[10px] shrink-0">
              <Arr />
            </div>
            <div className="flex h-full w-[6px] shrink-0">
              <Sep />
            </div>
            <div className="flex h-[31px] w-[33px] shrink-0 flex-col items-center border-2 border-[#b08040] bg-linear-to-b from-[#f79a48] to-[#ffa040] pt-[5px]">
              <Fit w={18} className="text-[10px] leading-[12px]">Bid</Fit>
              <div className="mt-[1px] h-[2px] w-[16px] bg-[#0a7bff]" />
            </div>
            <div className="flex h-[31px] w-[37px] shrink-0 flex-col items-center pt-[7px]">
              <Fit w={18} className="text-[10px] leading-[12px]">Ask</Fit>
              <div className="mt-[1px] h-[2px] w-[16px] bg-[#ff5a36]" />
            </div>
            <div className="flex h-full w-[14px] shrink-0">
              <Sep />
            </div>
            {tools.map(([c, n], i) => (
              <div key={i} className={c + " flex h-full shrink-0 items-center pt-[1px]"}>
                {n}
              </div>
            ))}
            <div className="flex h-full w-[18px] shrink-0 items-center justify-center border-b-2 border-[#a0a0b8] bg-linear-to-b from-[#f6f6fa] to-[#c4c4d3]">
              <svg width="10" height="12" viewBox="0 0 10 12" fill="none" stroke="#9a9ab0">
                <path d="M0 1.500h7M0 4.500h7M0 7.500h4" />
                <path d="M4 7h6l-3 3.500z" fill="#8a8aa2" stroke="none" />
              </svg>
            </div>
          </div>
        </div>
      </div>

      {/* overview with quote box */}
      <div className="relative h-[175px] shrink-0">
        <Overview />
        <div className="absolute left-[7px] top-[49px] flex h-[30px] w-[234px] bg-[#e6e6e8]/90 pl-[1px] text-[11px] leading-[12px] text-black">
          <Fit w={11} className="mt-[8px] text-[15px] leading-[15px] text-[#66668c]">S</Fit>
          <Fit w={26} className="ml-[5px] mt-[13px] font-bold">1.72</Fit>
          <Fit w={28} className="ml-[4px] mt-[4px] text-[20px] font-bold leading-[20px]">65</Fit>
          <Fit w={8} className="ml-[4px] mt-[4px] font-bold">0</Fit>
          <div className="ml-[5px] mt-[5px] flex h-[20px] w-[50px] items-center justify-between bg-white px-[2px]">
            <span className="text-[18px] leading-[20px] text-[#c4c4c4]">1</span>
            <div className="h-0 w-0 border-x-[3px] border-t-[3px] border-x-transparent border-t-[#d0d0d8]" />
          </div>
          <Fit w={26} className="ml-[5px] mt-[13px] font-bold">1.72</Fit>
          <Fit w={28} className="ml-[4px] mt-[4px] text-[20px] font-bold leading-[20px]">67</Fit>
          <Fit w={8} className="ml-[4px] mt-[4px] font-bold">1</Fit>
          <Fit w={11} className="ml-[5px] mt-[8px] text-[15px] leading-[15px] text-[#66668c]">B</Fit>
        </div>
        <div className="absolute left-[11px] top-[80px] text-[21px] leading-[26px] text-[#33336b]">
          <Fit w={297}>[Template:  `Split Numbers]</Fit>
        </div>
      </div>

      {/* indicator pane with value table */}
      <div className="relative h-[1443px] shrink-0">
        <Pane />
        <div className="absolute left-0 top-[102px] w-[1650px] font-['Liberation_Mono','Courier_New',monospace] text-black">
          <div className="grid h-[60px] grid-cols-[240px_209px_300px_300px_300px_299px] text-right text-[37px] leading-[45px]">
            <span />
            {["m1", "m5", "m15", "m30", "H1"].map((h) => (
              <span key={h} className="pr-[2px] tracking-[2.300px]">{h}</span>
            ))}
          </div>
          {rows.map((r) => (
            <div key={r[0]} className="grid h-[45px] grid-cols-[240px_209px_300px_300px_300px_299px] text-right text-[30px] leading-[45px]">
              {r.map((v, i) => (
                <span key={i} className={i === 0 ? "text-[37px] tracking-[3px]" : ""}>
                  {v}
                </span>
              ))}
            </div>
          ))}
        </div>
      </div>

      {/* status bar */}
      <div className="flex h-[26px] shrink-0 flex-col">
        <div className="h-[6px] shrink-0 border-t border-white bg-[#e5e5ee]" />
        <div className="h-[6px] shrink-0 border-b border-t border-b-[#e8e8ec] border-t-[#d3d3de] bg-[#f0f0f5]" />
        <div className="flex h-[12px] shrink-0 overflow-hidden bg-[#f4f4f6] pl-[2031px] pt-[3px] text-[11px] leading-[16px] text-black">
          <div className="w-[114px] shrink-0"><Fit w={63}>Connected</Fit></div>
          <div className="w-[110px] shrink-0"><Fit w={92}>Trading is Open</Fit></div>
          <div className="w-[33px] shrink-0">
            <svg width="17" height="12" viewBox="0 0 17 12">
              <path d="M0 4h5V2h7v2h5v8H0z" fill="#f6d21c" />
              <path d="M0 4.500h5l3.500-4 3.500 4h5M8.500 1v11" stroke="#174f86" strokeWidth="1.500" fill="none" />
            </svg>
          </div>
          <div className="w-[113px] shrink-0"><Fit w={91}>Demo:GBDEMO</Fit></div>
          <div className="w-[88px] shrink-0"><Fit w={66}>D25619710</Fit></div>
          <div className="w-[62px] shrink-0"><Fit w={41}>Server</Fit></div>
          <div className="shrink-0"><Fit w={184}>Server time 14:36 (UTC+01:00)</Fit></div>
        </div>
        <div className="flex h-[2px] shrink-0">
          <div className="w-[96px] bg-[#222226]" />
          <div className="w-[688px] border-t border-[#b4b4b8] bg-[#eee]" />
          <div className="flex-1 bg-[#222226]" />
        </div>
      </div>
    </div>
  );
}
